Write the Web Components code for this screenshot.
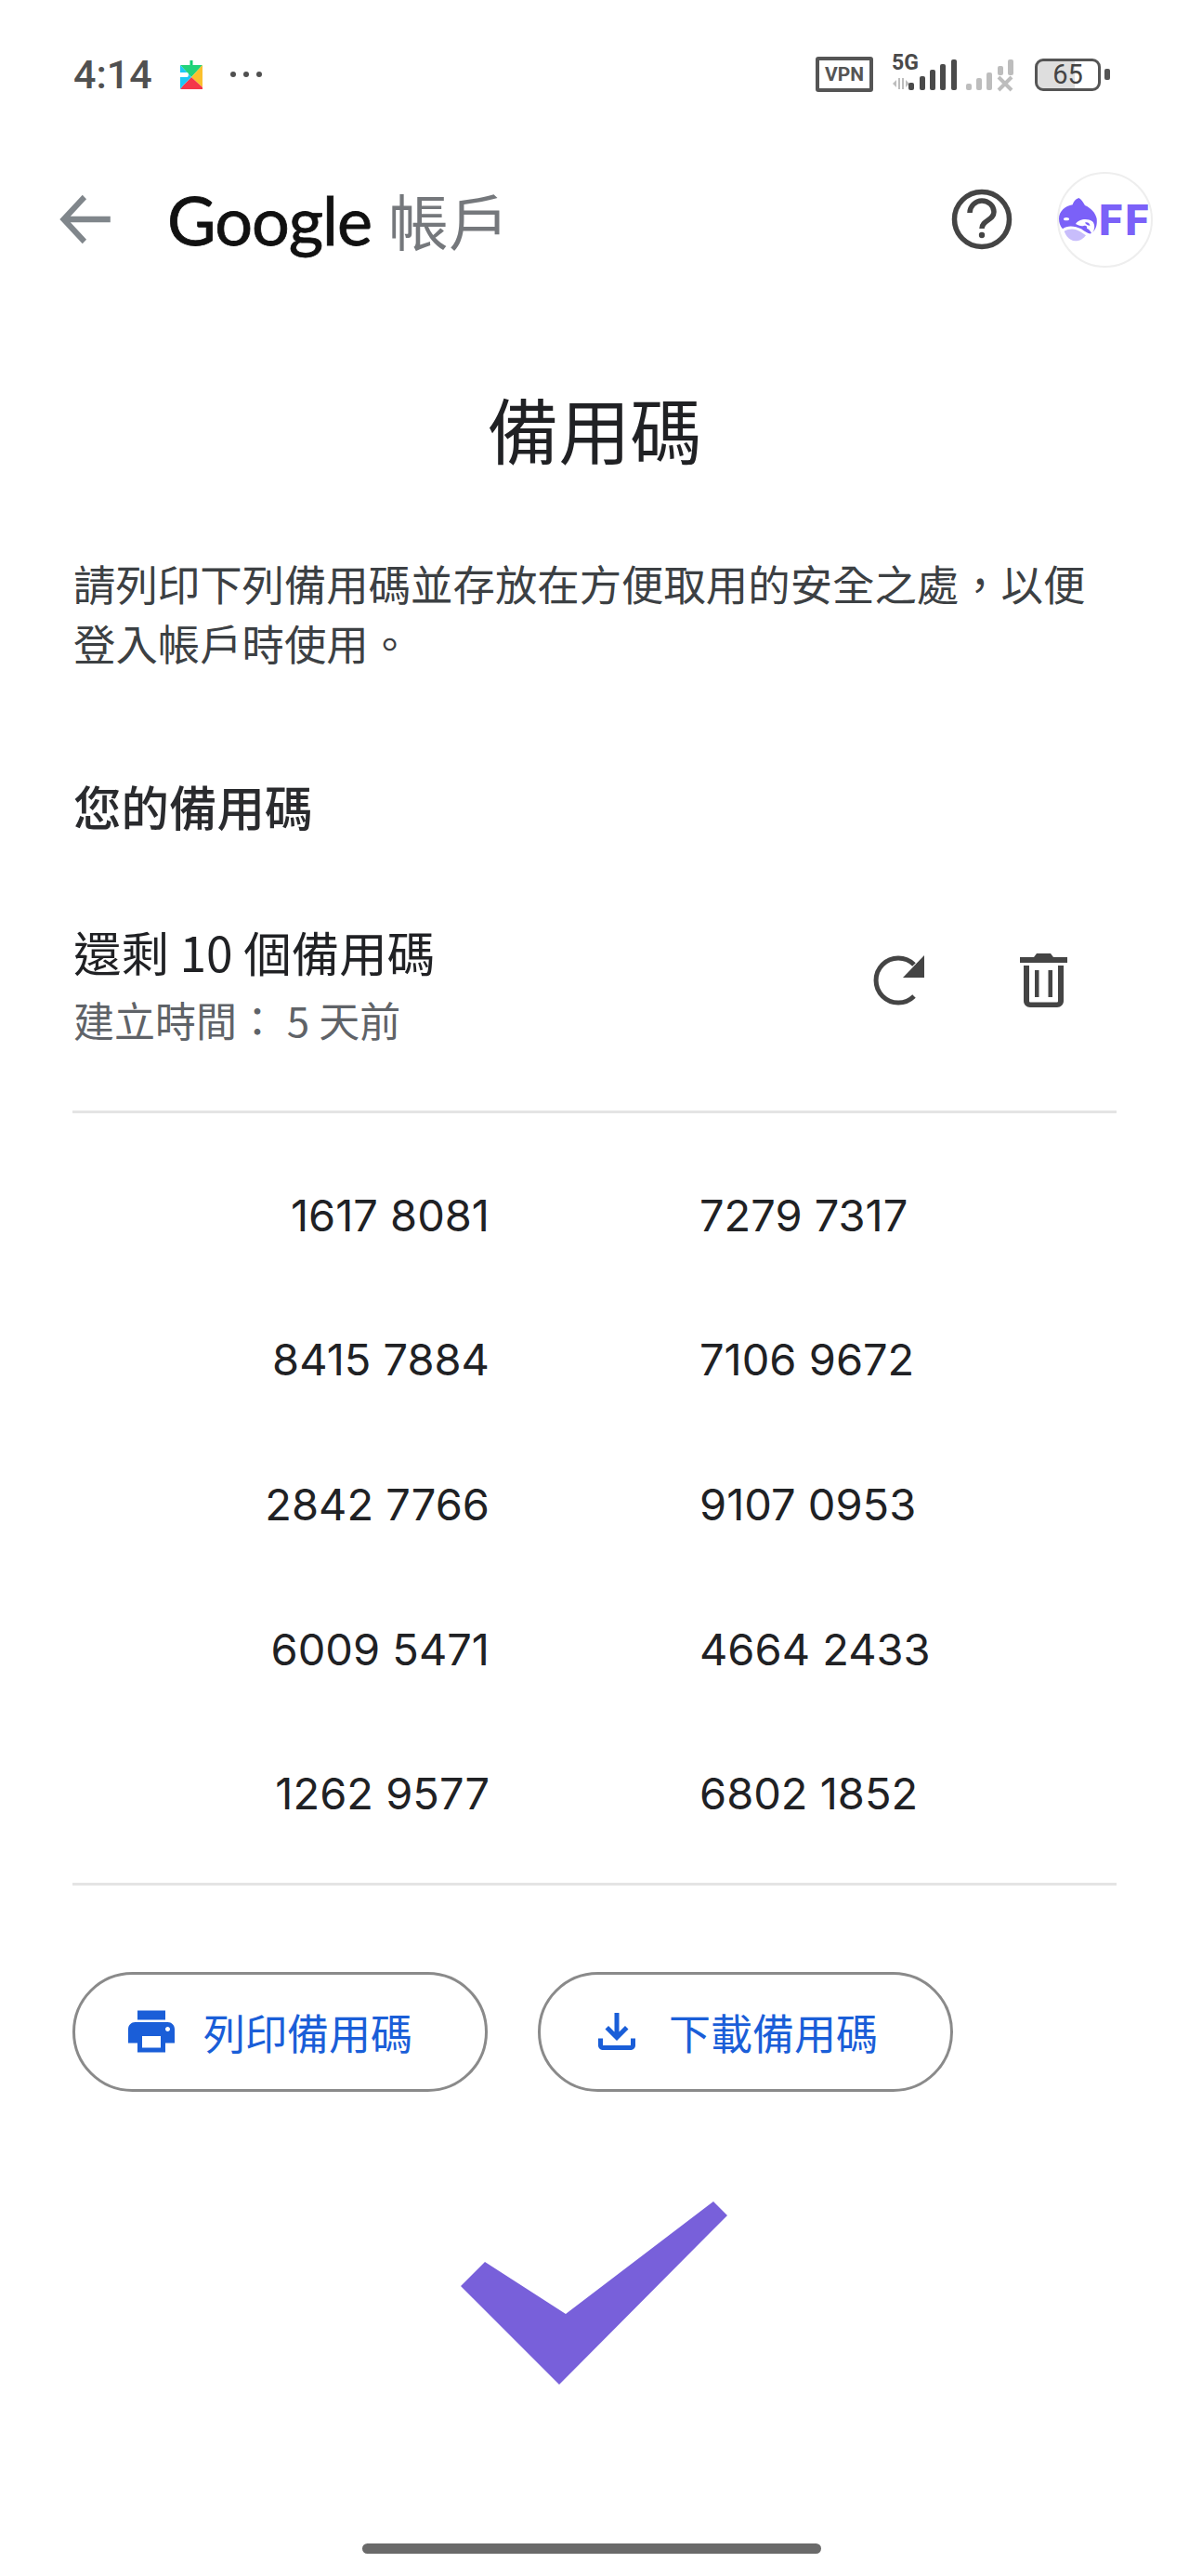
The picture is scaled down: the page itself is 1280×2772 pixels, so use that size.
<!doctype html>
<html lang="zh-Hant">
<head>
<meta charset="utf-8">
<title>備用碼</title>
<style>
  html, body { margin: 0; background: #fff; }
  body { font-family: "Noto Sans CJK SC", "Noto Sans CJK TC", sans-serif; }
</style>
</head>
<body>
<backup-codes-screen>
  <phone-status-bar slot="status"></phone-status-bar>
  <account-header slot="header"></account-header>
  <code-summary slot="summary" title-text="還剩 10 個備用碼" sub-text="建立時間： 5 天前"></code-summary>
  <code-table slot="codes">
    <code-pair a="1617 8081" b="7279 7317"></code-pair>
    <code-pair a="8415 7884" b="7106 9672"></code-pair>
    <code-pair a="2842 7766" b="9107 0953"></code-pair>
    <code-pair a="6009 5471" b="4664 2433"></code-pair>
    <code-pair a="1262 9577" b="6802 1852"></code-pair>
  </code-table>
  <pill-button slot="actions" icon="print">列印備用碼</pill-button>
  <pill-button slot="actions" icon="download">下載備用碼</pill-button>
</backup-codes-screen>

<script>
const CJK = `"Noto Sans CJK SC", "Noto Sans CJK TC", sans-serif`;

function mount(el, html) {
  if (!el.shadowRoot) el.attachShadow({ mode: "open" });
  el.shadowRoot.innerHTML = html;
}

// Full-page frame: everything flows top to bottom, the check mark floats above it.
class BackupCodesScreen extends HTMLElement {
  connectedCallback() {
    mount(this, `<style>
      :host { display: flex; flex-direction: column; position: relative; width: 1280px; height: 2772px; overflow: hidden; background: #fff; font-family: ${CJK}; }
      h1 { margin: 102px 0 0; height: 94px; font: 400 77px/94px ${CJK}; color: #202124; text-align: center; }
      main { display: flex; flex-direction: column; padding: 0 78px; }
      p { margin: 87px 0 0 1px; font-size: 45.4px; line-height: 64px; color: #3c4043; white-space: nowrap; }
      h2 { margin: 109px 0 0 1px; font: 500 51.500px/70px ${CJK}; color: #2a2b2e; }
      .actions { display: flex; gap: 54px; margin-top: 93px; }
      .home { width: 494px; height: 11px; border-radius: 6px; background: #6a6a6a; margin: auto 0 24px 390px; }
      .check { position: absolute; left: 490px; top: 2364px; }
    </style>
    <slot name="status"></slot>
    <slot name="header"></slot>
    <h1>備用碼</h1>
    <main>
      <p>請列印下列備用碼並存放在方便取用的安全之處，以便<br>登入帳戶時使用。</p>
      <h2>您的備用碼</h2>
      <slot name="summary"></slot>
      <slot name="codes"></slot>
      <div class="actions"><slot name="actions"></slot></div>
    </main>
    <div class="home"></div>
    <svg class="check" width="300" height="210" viewBox="490 2364 300 210"><polygon fill="#7860da" points="496,2460 522,2434 609,2490 768,2369 783,2384 602,2566"/></svg>`);
  }
}

class PhoneStatusBar extends HTMLElement {
  connectedCallback() {
    mount(this, `<style>
      :host { display: flex; align-items: center; height: 160px; padding: 0 85px 0 79px; box-sizing: border-box; color: #505050; font-family: Roboto, sans-serif; }
      .time { font-size: 43px; font-weight: 500; width: 115px; }
      .dots { display: flex; gap: 8px; margin-left: 30px; }
      .dots i { width: 6px; height: 6px; border-radius: 50%; background: #505050; }
      .right { display: flex; align-items: center; margin-left: auto; }
      .vpn { width: 62px; height: 38px; box-sizing: border-box; border: 4px solid #555; border-radius: 3px; font: 700 21px/30px Roboto, sans-serif; text-align: center; color: #555; }
      .net { position: relative; display: block; width: 134px; height: 42px; margin-left: 18px; }
      .net svg { display: block; }
      .g5 { position: absolute; left: 2px; top: -2px; font: 700 23px/22px Roboto, sans-serif; color: #4a4a4a; }
      .batt { display: flex; align-items: center; margin-left: 22px; }
      .cell { width: 71px; height: 35px; box-sizing: border-box; border: 3.5px solid #555; border-radius: 9px; text-align: center; font: 400 29px/28px Roboto, sans-serif; color: #444; background: linear-gradient(90deg, #dedede 62%, #fff 62%); background-clip: padding-box; }
      .tip { width: 6px; height: 12px; margin-left: 4px; border-radius: 2px; background: #555; }
    </style>
    <span class="time">4:14</span>
    <svg width="24" height="31" viewBox="0 0 24 31">
      <rect x="10.500" y="0" width="3" height="7" fill="#10d070"/>
      <polygon points="0,5 24,5 12,18" fill="#22d37a"/>
      <polygon points="24,5 24,29 12,18" fill="#fbc02d"/>
      <polygon points="0,31 24,31 24,29 12,18 3,27" fill="#f4374a"/>
      <polygon points="0,5 12,18 3,27 0,31" fill="#1cc8f5"/>
      <path d="M0 13h7.500c1.800 0 1.800 5 0 5H0z" fill="#fff"/>
    </svg>
    <span class="dots"><i></i><i></i><i></i></span>
    <span class="right">
      <span class="vpn">VPN</span>
      <span class="net">
        <span class="g5">5G</span>
        <svg width="134" height="42" viewBox="958 60 134 42">
          <g fill="#bdbdbd"><path d="M961 91l4-4v8zM967 85h2v12h-2zM971 85h2v12h-2zM975 87l4 4-4 4z"/></g>
          <g fill="#4a4a4a"><rect x="978" y="90" width="6" height="8" rx="2"/><rect x="990" y="83" width="6" height="15" rx="2"/><rect x="1001" y="76" width="6" height="22" rx="2"/><rect x="1012" y="70" width="6" height="28" rx="2"/><rect x="1024" y="65" width="6" height="33" rx="2"/></g>
          <g fill="#bdbdbd"><rect x="1040" y="91" width="6" height="7" rx="2"/><rect x="1051" y="85" width="6" height="13" rx="2"/><rect x="1062" y="79" width="6" height="19" rx="2"/><rect x="1074" y="72" width="6" height="10" rx="2"/><rect x="1085" y="65" width="6" height="17" rx="2"/></g>
          <path d="M1075 84l14 14M1089 84l-14 14" stroke="#bdbdbd" stroke-width="4" fill="none"/>
        </svg>
      </span>
      <span class="batt"><span class="cell">65</span><span class="tip"></span></span>
    </span>`);
  }
}

class AccountHeader extends HTMLElement {
  connectedCallback() {
    mount(this, `<style>
      :host { display: flex; align-items: center; height: 152px; padding: 0 39px 0 62px; box-sizing: border-box; }
      .back { display: block; width: 60px; height: 60px; }
      .brand { margin-left: 58px; display: flex; align-items: baseline; }
      .g { font: 400 72px/76px Lato, sans-serif; color: #111; letter-spacing: -1px; -webkit-text-stroke: .8px #111; }
      .t { margin-left: 18px; font: 400 65px/76px ${CJK}; color: #75787c; }
      .help { display: block; margin-left: auto; width: 78px; height: 78px; }
      .avatar { display: flex; align-items: center; margin-left: 42px; width: 103px; height: 103px; box-sizing: border-box; border: 2px solid #eee; border-radius: 50%; }
      .avatar svg { display: block; flex: none; margin-left: -1px; }
      .ff { font: 900 46px/50px Roboto, sans-serif; color: #7b61f8; letter-spacing: 3px; margin: 2px 0 0 0; }
    </style>
    <svg class="back" viewBox="0 0 60 60" fill="none" stroke="#80868b" stroke-width="6.500"><path d="M60 30H6M30 6L6 30l24 24" transform="translate(1 0) scale(.93 1)"/></svg>
    <div class="brand"><span class="g">Google</span><span class="t">帳戶</span></div>
    <svg class="help" viewBox="0 0 78 78" fill="none" stroke="#444" stroke-width="5.500"><circle cx="39" cy="39" r="29.500"/><path d="M26 32c0-7 6-13 13-13s13 5.500 13 12c0 9-13 9-13 18"/><circle cx="39" cy="56" r="3.200" fill="#444" stroke="none"/></svg>
    <div class="avatar">
      <svg width="44" height="48" viewBox="25 35 132 144">
        <path fill="#7b61f8" d="M92 38C80 42 75 50 72 60 48 64 28 82 28 105c0 13 4 25 12 33 15-13 40-10 60 0 15 12 30 20 35 12 13-10 17-25 15-45-4-20-20-35-38-43-7-12-12-20-20-24z"/>
        <ellipse cx="52" cy="106" rx="9" ry="5" fill="#fff"/>
        <path fill="#fff" d="M82 122c10-16 38-20 54-8 10 10 8 28-2 40-4-10-10-16-16-18 2-8-4-10-10-8-10 2-18-2-26-6z"/>
        <path fill="#7b61f8" d="M112 118c8-3 16 2 16 10-6-2-12-4-16-10z"/>
        <path fill="#c8bdfb" d="M45 145c18-10 38-8 52 2 6 4 12 8 18 12-12 14-22 18-34 18-16 0-30-14-36-32z"/>
      </svg>
      <span class="ff">FF</span>
    </div>`);
  }
}

class CodeSummary extends HTMLElement {
  connectedCallback() {
    mount(this, `<style>
      :host { display: flex; align-items: flex-start; height: 207px; margin-top: 89px; padding-left: 1px; box-sizing: border-box; border-bottom: 3px solid #e4e4e4; width: 1124px; }
      .text { flex: 1; }
      .title { font-size: 51.500px; line-height: 66px; color: #202124; }
      .sub { margin-top: 7px; font-size: 44px; line-height: 66px; color: #5f6368; }
      svg { display: block; }
      .refresh { margin: 32px 97px 0 0; }
      .trash { margin: 35px 53px 0 0; }
    </style>
    <div class="text"><div class="title">${this.getAttribute("title-text")}</div><div class="sub">${this.getAttribute("sub-text")}</div></div>
    <svg class="refresh" width="64" height="64" viewBox="0 0 64 64"><path d="M47 15A24 24 0 1 0 47 49" fill="none" stroke="#444" stroke-width="5"/><polygon points="58,5 58,29 35,29" fill="#444"/></svg>
    <svg class="trash" width="51" height="58" viewBox="0 0 51 58" fill="#444"><path d="M18 0h15l3 4h15v6H0V4h15zM4 13h43v38c0 4-3 7-7 7H11c-4 0-7-3-7-7zm6 0v38c0 1 .5 1.500 1.500 1.500h28c1 0 1.500-.5 1.500-1.500V13z"/><rect x="16" y="18" width="4.500" height="29"/><rect x="30.500" y="18" width="4.500" height="29"/></svg>`);
  }
}

class CodeTable extends HTMLElement {
  connectedCallback() {
    mount(this, `<style>
      :host { display: flex; flex-direction: column; width: 1124px; padding: 32px 0 18px; box-sizing: border-box; border-bottom: 3px solid #e4e4e4; }
    </style><slot></slot>`);
  }
}

class CodePair extends HTMLElement {
  connectedCallback() {
    mount(this, `<style>
      :host { display: grid; grid-template-columns: 449px 1fr; column-gap: 226px; height: 155.600px; align-items: center; font: 400 47px/60px Inter, sans-serif; color: #202124; }
      .a { text-align: right; }
    </style><span class="a">${this.getAttribute("a")}</span><span>${this.getAttribute("b")}</span>`);
  }
}

const BUTTON_ICONS = {
  print: "M19 8H5c-1.660 0-3 1.340-3 3v6h4v4h12v-4h4v-6c0-1.660-1.340-3-3-3zm-3 11H8v-5h8v5zm3-7c-.55 0-1-.45-1-1s.45-1 1-1 1 .45 1 1-.45 1-1 1zm-1-9H6v4h12V3z",
  download: "M18 15v3H6v-3H4v3c0 1.100.9 2 2 2h12c1.100 0 2-.9 2-2v-3h-2zm-1-4l-1.410-1.410L13 12.170V4h-2v8.170L8.410 9.590 7 11l5 5 5-5z",
};

class PillButton extends HTMLElement {
  connectedCallback() {
    mount(this, `<style>
      :host { display: flex; align-items: center; gap: 26px; width: 447px; height: 129px; box-sizing: border-box; padding-left: 52px; border: 3px solid #8a8a8a; border-radius: 65px; color: #1a5ed8; font-size: 45px; }
      svg { display: block; flex: none; }
    </style>
    <svg width="60" height="60" viewBox="0 0 24 24" fill="currentColor"><path d="${BUTTON_ICONS[this.getAttribute("icon")]}"/></svg>
    <slot></slot>`);
  }
}

customElements.define("backup-codes-screen", BackupCodesScreen);
customElements.define("phone-status-bar", PhoneStatusBar);
customElements.define("account-header", AccountHeader);
customElements.define("code-summary", CodeSummary);
customElements.define("code-table", CodeTable);
customElements.define("code-pair", CodePair);
customElements.define("pill-button", PillButton);
</script>
</body>
</html>
